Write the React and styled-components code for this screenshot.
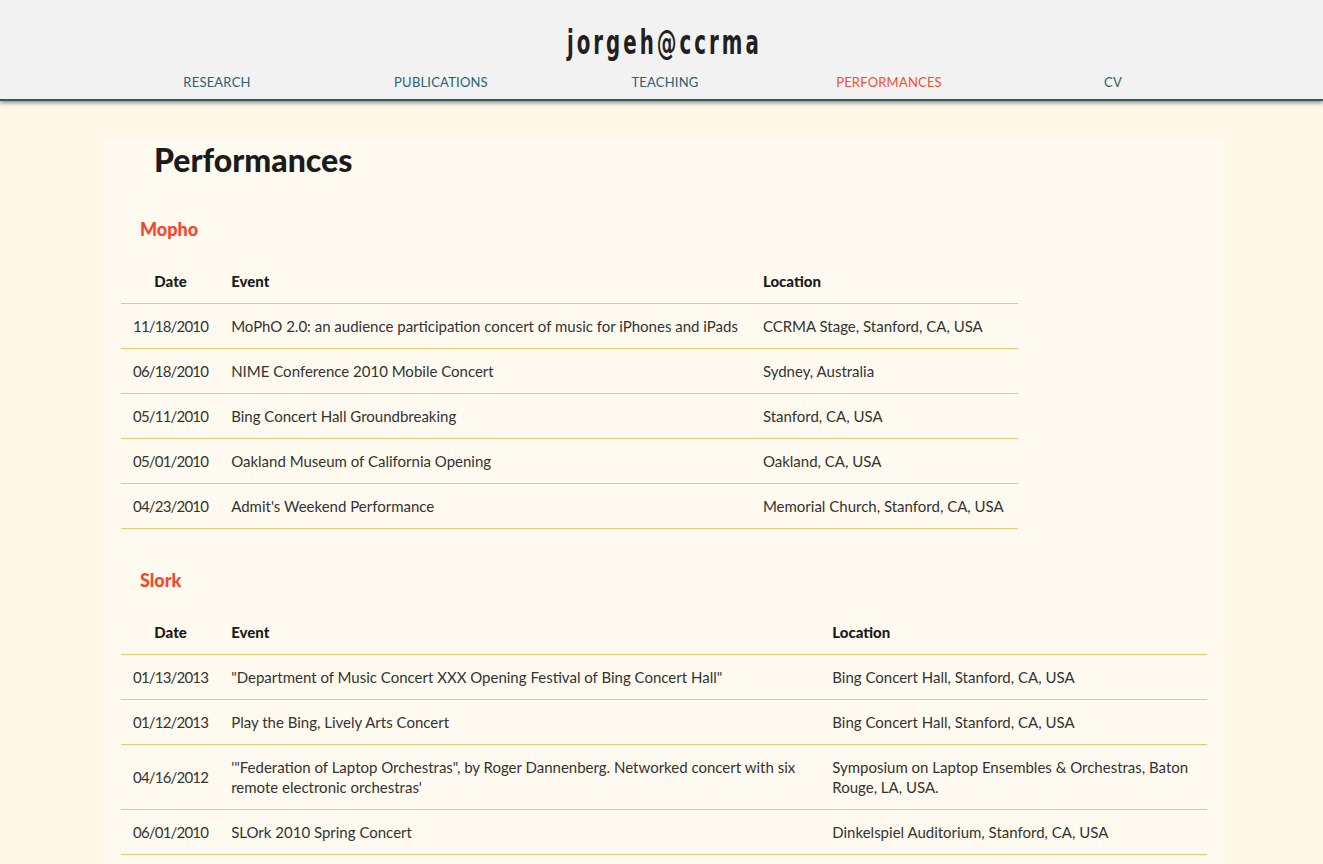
import React from "react";
import styled, { createGlobalStyle } from "styled-components";

const GlobalStyle = createGlobalStyle`
  html, body {
    margin: 0;
    padding: 0;
    background-color: #fff7e7;
    font-family: Lato, "Open Sans", sans-serif;
    color: #333;
  }
`;

const Header = styled.header`
  background-color: #f2f2f2;
  height: 99px;
  border-bottom: 2px solid #2d5a63;
  box-shadow: 0 2px 4px rgba(40, 60, 60, 0.55);
  display: flex;
  flex-direction: column;
  align-items: center;
`;

// condensed display face for the site name
const Logo = styled.div`
  font-family: "DejaVu Sans", sans-serif;
  font-weight: bold;
  font-size: 33px;
  letter-spacing: 5px;
  color: #231f20;
  margin: 25px 0 0 5px;
  line-height: 36px;
  transform: scaleX(0.6);
`;

const Nav = styled.nav`
  width: 1120px;
  margin: 12px 0 0 7px;
  display: grid;
  grid-template-columns: repeat(5, 1fr);
`;

const NavItem = styled.a`
  text-align: center;
  font-size: 13px;
  letter-spacing: 0.2px;
  line-height: 18px;
  color: ${({ active }) => (active ? "#f0512f" : "#2a6170")};
  text-decoration: none;
`;

const Panel = styled.main`
  width: 1120px;
  margin: 38px 0 0 104px;
  background-color: #fffaef;
  padding: 0 17px 40px;
  box-sizing: border-box;
`;

const Title = styled.h1`
  font-size: 32px;
  font-weight: 900;
  color: #1b1b1b;
  margin: 0 0 0 33px;
  line-height: 42px;
`;

const Section = styled.h2`
  font-size: 18px;
  font-weight: 900;
  color: #f4472b;
  margin: ${({ first }) => (first ? "36px" : "39px")} 0 18px 19px;
  line-height: 24px;
`;

const Table = styled.table`
  border-collapse: collapse;
  font-size: 15px;
  line-height: 20px;
  width: ${({ full }) => (full ? "100%" : "auto")};
`;

const Th = styled.th`
  text-align: ${({ center }) => (center ? "center" : "left")};
  font-weight: 900;
  color: #1b1b1b;
  padding: 12px ${({ center }) => (center ? "12px" : "14px 12px 11px")};
  border-bottom: 1px solid #f2c66f;
`;

const Td = styled.td`
  text-align: ${({ center }) => (center ? "center" : "left")};
  vertical-align: middle;
  padding: 12px ${({ center }) => (center ? "12px" : "14px 12px 11px")};
  letter-spacing: ${({ center }) => (center ? "-0.8px" : "0")};
  border-bottom: 1px solid #f2c66f;
`;

const mopho = [
  ["11/18/2010", "MoPhO 2.0: an audience participation concert of music for iPhones and iPads", "CCRMA Stage, Stanford, CA, USA"],
  ["06/18/2010", "NIME Conference 2010 Mobile Concert", "Sydney, Australia"],
  ["05/11/2010", "Bing Concert Hall Groundbreaking", "Stanford, CA, USA"],
  ["05/01/2010", "Oakland Museum of California Opening", "Oakland, CA, USA"],
  ["04/23/2010", "Admit's Weekend Performance", "Memorial Church, Stanford, CA, USA"],
];

const slork = [
  ["01/13/2013", "\"Department of Music Concert XXX Opening Festival of Bing Concert Hall\"", "Bing Concert Hall, Stanford, CA, USA"],
  ["01/12/2013", "Play the Bing, Lively Arts Concert", "Bing Concert Hall, Stanford, CA, USA"],
  ["04/16/2012", "'\"Federation of Laptop Orchestras\", by Roger Dannenberg. Networked concert with six remote electronic orchestras'", "Symposium on Laptop Ensembles & Orchestras, Baton Rouge, LA, USA."],
  ["06/01/2010", "SLOrk 2010 Spring Concert", "Dinkelspiel Auditorium, Stanford, CA, USA"],
];

const PerfTable = ({ rows, full }) => (
  <Table full={full}>
    <thead>
      <tr>
        <Th center>Date</Th>
        <Th>Event</Th>
        <Th>Location</Th>
      </tr>
    </thead>
    <tbody>
      {rows.map((r) => (
        <tr key={r[0] + r[1]}>
          <Td center>{r[0]}</Td>
          <Td>{r[1]}</Td>
          <Td>{r[2]}</Td>
        </tr>
      ))}
    </tbody>
  </Table>
);

const nav = ["RESEARCH", "PUBLICATIONS", "TEACHING", "PERFORMANCES", "CV"];

export default function App() {
  return (
    <>
      <GlobalStyle />
      <Header>
        <Logo>jorgeh@ccrma</Logo>
        <Nav>
          {nav.map((n) => (
            <NavItem key={n} href="#" active={n === "PERFORMANCES"}>
              {n}
            </NavItem>
          ))}
        </Nav>
      </Header>
      <Panel>
        <Title>Performances</Title>
        <Section first>Mopho</Section>
        <PerfTable rows={mopho} />
        <Section>Slork</Section>
        <PerfTable rows={slork} full />
      </Panel>
    </>
  );
}
